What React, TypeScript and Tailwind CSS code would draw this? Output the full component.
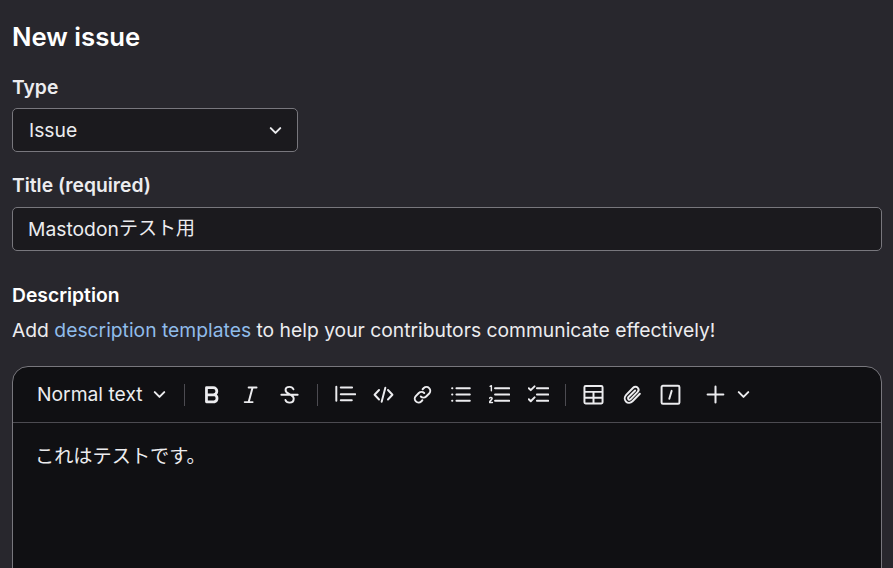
import React from 'react';
import { ChevronDown, Plus } from 'lucide-react';

const Icon = ({ children, className = '' }: { children: React.ReactNode; className?: string }) => (
  <svg
    viewBox="0 0 16 16"
    fill="none"
    stroke="currentColor"
    strokeWidth={1.5}
    strokeLinecap="round"
    strokeLinejoin="round"
    className={`w-[21px] h-[21px] flex-shrink-0 ${className}`}
  >
    {children}
  </svg>
);

const icons: Record<string, React.ReactNode> = {
  bold: <path strokeWidth={2.1} d="M3.4 2.8h5.2a2.7 2.7 0 0 1 0 5.4H3.4zM3.4 8.2h6a2.8 2.8 0 0 1 0 5.4h-6z" />,
  italic: <path d="M6.6 2.6h6M3.6 13.8h6M9.6 2.6 6.6 13.8" />,
  strike: <path d="M1.8 8.2h12.4M11 4C10.6 3 9.5 2.2 8 2.2 6.2 2.2 5 3.2 5 4.6c0 1.3 1 2.2 3 3.2 2.2 1 3.2 2 3.2 3.4 0 1.7-1.3 3-3.2 3-1.5 0-2.7-.8-3.1-2" />,
  quote: <path d="M1 2v10.8M4.4 2.6h8.6M4.4 7.8h11M4.4 12.4h8.4" />,
  code: <path d="M4.6 4.6 1.2 8.2l3.4 3.6M11.4 4.6l3.4 3.6-3.4 3.6M9.4 2.8 6.6 13.6" />,
  link: <path d="M6.7 9.5a2.9 2.9 0 0 0 4.1 0l2.3-2.3A2.9 2.9 0 0 0 9 3.1l-.9.9M9.3 6.9a2.9 2.9 0 0 0-4.1 0L2.9 9.2A2.9 2.9 0 0 0 7 13.3l.9-.9" />,
  bullets: <path d="M4.9 3.2h10.2M4.9 8h10.2M4.9 12.8h10.2M1.6 3.2h.2M1.6 8h.2M1.6 12.8h.2" />,
  numbered: (
    <>
      <path d="M4.6 3.2h10.8M4.6 8h10.8M4.6 12.8h10.8" />
      <path strokeWidth={1.1} d="M.9 1.8l.9-.5v3.8M.4 10.8c.3-.6 2-.7 2 .3 0 .9-2 1.6-2 3h2.2" />
    </>
  ),
  tasks: <path d="M6.8 3.2h8.6M6.8 8h8.6M6.8 12.8h8.6M.6 3.2l1.5 1.5L5 1.8M.6 11.6l1.5 1.5L5 10.2" />,
  table: <path d="M2 1.6h12a.9.9 0 0 1 .9.9v11.4a.9.9 0 0 1-.9.9H2a.9.9 0 0 1-.9-.9V2.5a.9.9 0 0 1 .9-.9zM1.1 6h13.8M1.1 10.4h13.8M8 6v8.8" />,
  clip: <path d="M13.6 7.4 8 13.1c-1.5 1.5-3.7 1.5-5 .2s-1.2-3.5.2-5l5.3-5.4c1-1 2.5-1 3.4-.1s.9 2.4-.1 3.4L6.6 11.5c-.5.5-1.3.5-1.7.1s-.4-1.2.1-1.7l5-5" />,
  slash: <path d="M2.2 1.4h11.6a1 1 0 0 1 1 1V14a1 1 0 0 1-1 1H2.2a1 1 0 0 1-1-1V2.4a1 1 0 0 1 1-1zM8.9 5.2 7.1 11.2" />,
};

const ToolButton = ({ name }: { name: string }) => (
  <span className="w-[38.6px] flex justify-center text-[#ececef]">
    <Icon>{icons[name]}</Icon>
  </span>
);

const Divider = () => <span className="w-px h-[22px] bg-[#4c4b51] mx-[8px]" />;

export default function App() {
  return (
    <div
      className="h-[568px] overflow-hidden bg-[#28272d] px-3 pr-[11px] text-[19.3px] text-[#ececef]"
      style={{ fontFamily: 'Inter, "Noto Sans CJK JP", sans-serif' }}
    >
      <h1 className="pt-[20px] text-[25.7px] leading-[34px] font-semibold text-white">New issue</h1>

      <div className="mt-[20px] leading-[26px] font-semibold text-[#ececef]">Type</div>
      <div className="mt-[8px] w-[286px] h-[44px] flex items-center justify-between pl-4 pr-[12px] bg-[#1b1a1e] border border-[#78777d] rounded-[5px]">
        <span>Issue</span>
        <ChevronDown className="w-[19px] h-[19px]" strokeWidth={2.5} />
      </div>

      <div className="mt-[20px] leading-[26px] font-semibold">Title (required)</div>
      <div className="mt-[9px] h-[44px] flex items-center pl-[15px] bg-[#1b1a1e] border border-[#78777d] rounded-[5px]">
        Mastodon<span className="text-[19px]">テスト用</span>
      </div>

      <div className="mt-[31px] leading-[26px] font-semibold text-white">Description</div>
      <p className="mt-[9px] leading-[26px]">
        Add <span className="text-[#90bcea]">description templates</span> to help your contributors communicate effectively!
      </p>

      <div className="mt-[23px] h-[240px] bg-[#101013] border border-[#78777d] rounded-t-[16px]">
        <div className="h-[56px] flex items-center pl-6 border-b border-[#4c4b51]">
          <span className="flex items-center gap-[7px] w-[139px]">
            Normal text
            <ChevronDown className="w-[19px] h-[19px]" strokeWidth={2.5} />
          </span>
          <Divider />
          {['bold', 'italic', 'strike'].map((n) => (
            <ToolButton key={n} name={n} />
          ))}
          <Divider />
          {['quote', 'code', 'link', 'bullets', 'numbered', 'tasks'].map((n) => (
            <ToolButton key={n} name={n} />
          ))}
          <Divider />
          {['table', 'clip', 'slash'].map((n) => (
            <ToolButton key={n} name={n} />
          ))}
          <span className="flex items-center ml-[12px] gap-[5px]">
            <Plus className="w-[27px] h-[27px]" strokeWidth={1.8} />
            <ChevronDown className="w-[19px] h-[19px]" strokeWidth={2.5} />
          </span>
        </div>
        <div className="pl-[22px] pt-[20px] leading-[26px] text-[19.2px]">これはテストです。</div>
      </div>
    </div>
  );
}
